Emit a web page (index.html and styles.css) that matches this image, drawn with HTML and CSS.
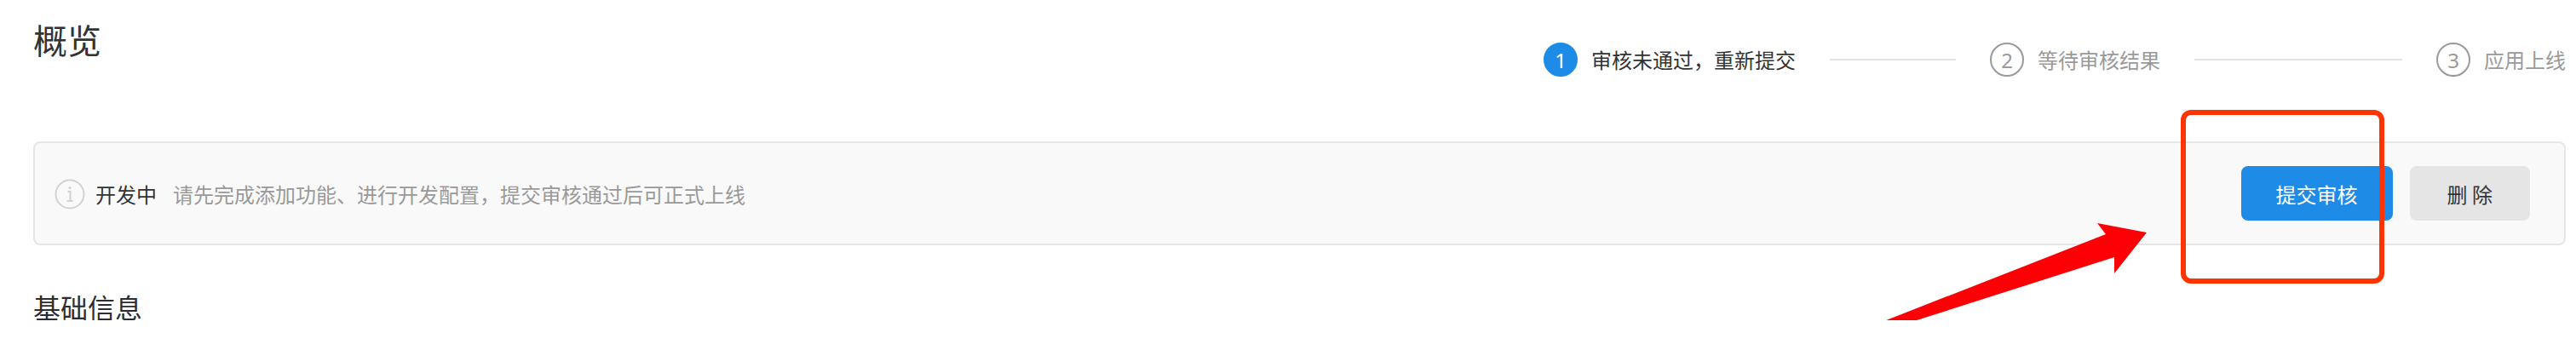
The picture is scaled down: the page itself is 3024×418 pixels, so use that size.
FILE: index.html
```html
<!DOCTYPE html>
<html>
  <head>
    <title>概览</title>
    <link rel="stylesheet" href="styles.css">
  </head>
  <body>
    <main class="page">
      <header class="top">
        <h1 class="title">概览</h1>
        <ol class="steps">
          <li class="step step-active">
            <span class="step-num">1</span>
            <span class="step-title">审核未通过，重新提交</span>
            <span class="step-line"></span>
          </li>
          <li class="step">
            <span class="step-num">2</span>
            <span class="step-title">等待审核结果</span>
            <span class="step-line"></span>
          </li>
          <li class="step">
            <span class="step-num">3</span>
            <span class="step-title">应用上线</span>
          </li>
        </ol>
      </header>

      <!-- 当前状态 -->
      <section class="status">
        <svg class="status-icon" width="36" height="36" viewBox="0 0 36 36">
          <circle cx="18" cy="18" r="16.5" fill="none" stroke="#d2d2d2" stroke-width="2"/>
          <circle cx="18" cy="10.5" r="1.6" fill="#d2d2d2"/>
          <path d="M15.5 15h3v11" fill="none" stroke="#d2d2d2" stroke-width="2"/>
          <path d="M14.5 26h7" fill="none" stroke="#d2d2d2" stroke-width="2"/>
        </svg>
        <span class="status-label">开发中</span>
        <span class="status-desc">请先完成添加功能、进行开发配置，提交审核通过后可正式上线</span>
        <div class="status-actions">
          <button class="btn btn-primary">提交审核</button>
          <button class="btn btn-default">删 除</button>
        </div>
      </section>

      <h2 class="section-title">基础信息</h2>

      <!-- 标注 -->
      <div class="mark-box"></div>
      <svg class="mark-arrow" width="350" height="150" viewBox="0 0 350 150">
        <path d="M19 132 L292 25 L282 12 L340 23 L302 71 L302 52 L23 141 Q15 143 15 137 Q15 134 19 132 Z" fill="#fc0006"/>
      </svg>
    </main>
  </body>
</html>
```

FILE: styles.css
```css
/* 样式重置 */
* {
  box-sizing: border-box;
  margin: 0;
  padding: 0;
  font-family: "Noto Sans CJK SC", "Noto Sans", sans-serif;
}

body {
  background-color: #fff;
  color: #333;
}

.page {
  position: relative;
  padding: 26px 12px 0 39px;
}

/* 顶部：标题和步骤条 */
.top {
  display: flex;
  justify-content: space-between;
  align-items: flex-start;
}

.title {
  font-size: 40px;
  line-height: 40px;
  font-weight: normal;
  color: #333;
}

.steps {
  list-style: none;
  display: flex;
  width: 1200px;
  margin-top: 24px;
}

.step {
  flex: 1;
  display: flex;
  align-items: center;
  height: 40px;
}

.step:last-child {
  flex: none;
}

.step-num {
  width: 40px;
  height: 40px;
  border: 2px solid #9a9a9a;
  border-radius: 50%;
  display: flex;
  align-items: center;
  justify-content: center;
  font-family: "Noto Sans", sans-serif;
  font-size: 24px;
  color: #9a9a9a;
}

.step-title {
  margin-left: 16px;
  font-size: 24px;
  line-height: 40px;
  color: #9a9a9a;
  white-space: nowrap;
}

.step-line {
  flex: 1;
  height: 2px;
  margin: 0 40px;
  background-color: #e3e3e3;
}

.step-active .step-num {
  border-color: #1e8ce6;
  background-color: #1e8ce6;
  color: #fff;
}

.step-active .step-title {
  color: #333;
}

/* 状态栏 */
.status {
  display: flex;
  align-items: center;
  height: 122px;
  margin-top: 76px;
  padding: 0 40px 0 23px;
  background-color: #f9f9f9;
  border: 2px solid #e6e6e6;
  border-radius: 8px;
}

.status-icon {
  flex: none;
  margin-top: 2px;
}

.status-label {
  margin-left: 12px;
  font-size: 24px;
  color: #333;
}

.status-desc {
  margin-left: 19px;
  font-size: 24px;
  color: #9a9a9a;
}

.status-actions {
  margin-left: auto;
  display: flex;
  gap: 20px;
}

.btn {
  height: 64px;
  padding: 0 41px;
  border: none;
  border-radius: 8px;
  font-size: 24px;
  cursor: pointer;
}

.btn-primary {
  background-color: #1e8ce6;
  color: #fff;
}

.btn-default {
  padding: 0 44px;
  background-color: #e5e5e5;
  color: #333;
}

.section-title {
  margin-top: 56px;
  font-size: 32px;
  line-height: 32px;
  font-weight: normal;
  color: #2c2d33;
}

/* 截图上的红色标注 */
.mark-box {
  position: absolute;
  left: 2560px;
  top: 129px;
  width: 239px;
  height: 204px;
  border: 6px solid #ff3400;
  border-radius: 12px;
}

.mark-arrow {
  position: absolute;
  left: 2180px;
  top: 250px;
}
```
